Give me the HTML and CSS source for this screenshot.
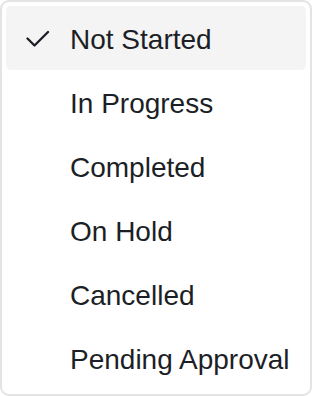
FILE: index.html
```html
<!DOCTYPE html>
<html lang="en">
<head>
    <meta charset="UTF-8">
    <meta name="viewport" content="width=device-width, initial-scale=1.0">
    <title>Status Menu</title>
    <link rel="stylesheet" href="styles.css">
</head>
<body>

<ul class="menu">
    <li class="item selected">
        <span class="check">
            <svg width="24" height="24" viewBox="0 0 24 24" fill="none" stroke="currentColor" stroke-width="2.3" stroke-linecap="round" stroke-linejoin="round"><path d="M1.5 12.5l7 7L22 6"/></svg>
        </span>
        Not Started
    </li>
    <li class="item"><span class="check"></span>In Progress</li>
    <li class="item"><span class="check"></span>Completed</li>
    <li class="item"><span class="check"></span>On Hold</li>
    <li class="item"><span class="check"></span>Cancelled</li>
    <li class="item"><span class="check"></span>Pending Approval</li>
</ul>

</body>
</html>
```

FILE: styles.css
```css
body { margin: 0; background: #fff; font-family: "Liberation Sans", Arial, sans-serif; }
.menu { list-style: none; margin: 0; padding: 4px; width: 312px; height: 396px; box-sizing: border-box; border: 2px solid #e4e4e4; border-radius: 9px; background: #fff; }
.item { display: flex; align-items: center; height: 64px; box-sizing: border-box; padding-top: 3px; color: #1c1f26; font-size: 28px; border-radius: 5px; }
.item.selected { background: #f4f4f4; }
.check { width: 24px; height: 24px; margin-left: 20px; margin-right: 20px; margin-top: -3px; color: #1c1f26; display: flex; }
```
